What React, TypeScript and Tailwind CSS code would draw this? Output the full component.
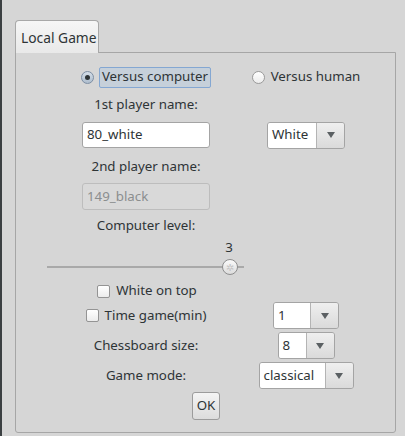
import React from 'react';

const font = { fontFamily: '"Noto Sans", "DejaVu Sans", sans-serif' };

const Arrow = () => (
  <svg width="8" height="6" viewBox="0 0 8 6">
    <polygon points="0,0 8,0 4,6" fill="#5b6063" />
  </svg>
);

const Combo = ({ value, left }: { value: string; left: string }) => (
  <div className="flex h-[27px] rounded-[3px] border border-[#a4a4a4] overflow-hidden">
    <div className={`${left} bg-white flex items-center pl-[4px] text-[#2e3436]`}>{value}</div>
    <div className="w-[28px] border-l border-[#b4b4b4] bg-gradient-to-b from-[#efefef] to-[#dadada] flex items-center justify-center">
      <Arrow />
    </div>
  </div>
);

const Check = () => (
  <div className="w-[13px] h-[13px] rounded-[2px] border border-[#949494] bg-gradient-to-b from-white to-[#ececec]" />
);

// two columns: left 200px, right 120px
const Row = ({ h, left, right, mt = '' }: { h: string; left?: React.ReactNode; right?: React.ReactNode; mt?: string }) => (
  <div className={`flex ${h} ${mt}`}>
    <div className="w-[200px] flex items-center justify-center">{left}</div>
    <div className="w-[120px] flex items-center justify-center">{right}</div>
  </div>
);

export default function App() {
  return (
    <div className="w-[405px] h-[436px] bg-[#d6d6d6] flex text-[13.3px] text-[#2e3436] overflow-hidden" style={font}>
      <div className="w-[2px] bg-[#3b4042]" />
      <div className="pl-[13px] pt-[20px] flex flex-col">
        <div className="flex">
          <div className="h-[33px] w-[84px] -mb-px relative z-10 rounded-t-[4px] border border-b-0 border-[#a8a8a8] bg-gradient-to-b from-[#f6f6f6] to-[#e9e9e9] flex items-center pl-[5px] pt-[3px] text-[13.8px]">
            Local Game
          </div>
        </div>
        <div className="w-[381px] h-[381px] border border-[#a6a6a6] rounded-b-[3px] pl-[30px] pt-[14px] flex flex-col">
          <Row
            h="h-[20px]"
            left={
              <div className="flex items-center">
                <div className="w-[13px] h-[13px] rounded-full border border-[#7d8ea3] bg-gradient-to-b from-[#d5dee8] to-[#aebdcd] flex items-center justify-center">
                  <div className="w-[5px] h-[5px] rounded-full bg-[#2e3436]" />
                </div>
                <div className="ml-[5px] h-[21px] px-[2px] rounded-[2px] border border-[#84a7d2] bg-[#c6d0da] flex items-center">
                  Versus computer
                </div>
              </div>
            }
            right={
              <div className="flex items-center">
                <div className="w-[13px] h-[13px] rounded-full border border-[#9a9a9a] bg-gradient-to-b from-white to-[#ececec]" />
                <span className="ml-[6px]">Versus human</span>
              </div>
            }
          />
          <Row h="h-[35px]" left={<span>1st player name:</span>} />
          <Row
            h="h-[26px]"
            left={
              <div className="w-[128px] h-[26px] rounded-[3px] border border-[#a4a4a4] bg-white flex items-center pl-[4px]">80_white</div>
            }
            right={<Combo value="White" left="w-[48px]" />}
          />
          <Row h="h-[35px]" left={<span className="pt-[3px]">2nd player name:</span>} />
          <Row
            h="h-[27px]"
            left={
              <div className="w-[128px] h-[27px] rounded-[3px] border border-[#bdbdbd] bg-[#d9d9d9] flex items-center pl-[4px] text-[#8b8e8f]">
                149_black
              </div>
            }
          />
          <Row h="h-[31px]" left={<span>Computer level:</span>} />
          <div className="w-[200px] h-[40px] relative">
            <div className="absolute left-[177px] top-0 w-[12px] text-center leading-[12px]">3</div>
            <div className="absolute left-[1px] top-[25px] w-[197px] h-[2px] bg-[#a9a9a9]" />
            <div className="absolute left-[176px] top-[18px] w-[16px] h-[16px] rounded-full border border-[#8e8e8e] bg-gradient-to-b from-[#fafafa] to-[#dcdcdc] flex items-center justify-center text-[#c4c4c4] text-[10px] leading-none">
              ✲
            </div>
          </div>
          <Row
            h="h-[20px]"
            left={
              <div className="flex items-center pl-[2px]">
                <Check />
                <span className="ml-[6px]">White on top</span>
              </div>
            }
          />
          <Row
            h="h-[27px]"
            mt="mt-[1px]"
            left={
              <div className="flex items-center">
                <Check />
                <span className="ml-[6px]">Time game(min)</span>
              </div>
            }
            right={<Combo value="1" left="w-[36px]" />}
          />
          <Row h="h-[27px]" mt="mt-[3px]" left={<span>Chessboard size:</span>} right={<Combo value="8" left="w-[27px]" />} />
          <Row h="h-[27px]" mt="mt-[3px]" left={<span>Game mode:</span>} right={<Combo value="classical" left="w-[65px]" />} />
          <div className="w-[320px] flex justify-center mt-[3px]">
            <div className="w-[28px] h-[28px] rounded-[3px] border border-[#9c9c9c] bg-gradient-to-b from-[#f4f4f4] to-[#dcdcdc] flex items-center justify-center">
              OK
            </div>
          </div>
        </div>
      </div>
    </div>
  );
}
